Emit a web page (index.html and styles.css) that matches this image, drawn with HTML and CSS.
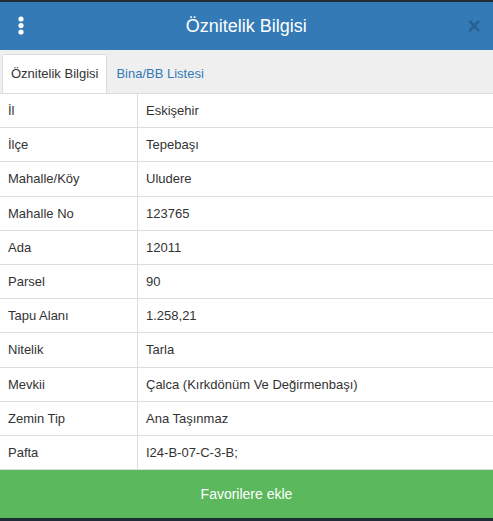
FILE: index.html
```html
<!DOCTYPE html>
<html lang="tr">
<head>
  <meta charset="UTF-8" />
  <meta name="viewport" content="width=device-width, initial-scale=1" />
  <title>Öznitelik Bilgisi</title>
  <link rel="stylesheet" href="styles.css">
</head>
<body>
  <div class="panel">
    <div class="panel-header">
      <button class="menu-btn" aria-label="Menü">
        <svg width="8" height="20" viewBox="0 0 8 20">
          <circle cx="4" cy="3" r="2.6" fill="#fff"/>
          <circle cx="4" cy="9.5" r="2.6" fill="#fff"/>
          <circle cx="4" cy="16" r="2.6" fill="#fff"/>
        </svg>
      </button>
      <h2>Öznitelik Bilgisi</h2>
      <button class="close-btn" aria-label="Kapat">&times;</button>
    </div>

    <div class="tabs">
      <a class="tab active" href="#">Öznitelik Bilgisi</a>
      <a class="tab" href="#">Bina/BB Listesi</a>
    </div>

    <table class="attr-table">
      <tbody id="attrRows"></tbody>
    </table>

    <button class="fav-btn">Favorilere ekle</button>
  </div>

  <script>
    const attrs = [
      ['İl', 'Eskişehir'],
      ['İlçe', 'Tepebaşı'],
      ['Mahalle/Köy', 'Uludere'],
      ['Mahalle No', '123765'],
      ['Ada', '12011'],
      ['Parsel', '90'],
      ['Tapu Alanı', '1.258,21'],
      ['Nitelik', 'Tarla'],
      ['Mevkii', 'Çalca (Kırkdönüm Ve Değirmenbaşı)'],
      ['Zemin Tip', 'Ana Taşınmaz'],
      ['Pafta', 'I24-B-07-C-3-B;']
    ];

    const attrRows = document.getElementById('attrRows');
    attrs.forEach(([key, value]) => {
      const row = document.createElement('tr');
      row.innerHTML = `<td class="key">${key}</td><td>${value}</td>`;
      attrRows.appendChild(row);
    });
  </script>
</body>
</html>
```

FILE: styles.css
```css
  body {
    font-family: "Liberation Sans", Arial, sans-serif;
    font-size: 13px;
    color: #333;
    margin: 0;
    background-color: #1f2b37;
  }
  .panel {
    margin-top: 2px;
    background: #fff;
    display: flex;
    flex-direction: column;
  }
  .panel-header {
    height: 48px;
    background-color: #337ab7;
    display: flex;
    align-items: center;
    padding: 0 12px 0 17px;
  }
  .panel-header h2 {
    flex: 1;
    margin: 0;
    text-align: center;
    color: #fff;
    font-size: 18px;
    font-weight: normal;
  }
  .menu-btn {
    background: none;
    border: none;
    padding: 0;
    display: flex;
  }
  .close-btn {
    background: none;
    border: none;
    padding: 0;
    font-family: "Liberation Sans", Arial, sans-serif;
    font-size: 23px;
    font-weight: bold;
    line-height: 1;
    color: #000;
    opacity: 0.2;
  }
  .tabs {
    display: flex;
    background-color: #efefef;
    padding: 4px 2px 0;
  }
  .tab {
    padding: 10px 8px 11px;
    line-height: 17px;
    color: #337ab7;
    text-decoration: none;
    border: 1px solid transparent;
    border-bottom: none;
    border-radius: 2px 2px 0 0;
  }
  .tab.active {
    background: #fff;
    color: #333;
    border-color: #ddd;
  }
  .attr-table {
    width: 100%;
    border-collapse: collapse;
  }
  .attr-table td {
    padding: 8px 8px;
    line-height: 17.2px;
    border-top: 1px solid #ddd;
  }
  .attr-table td.key {
    width: 121px;
    border-right: 1px solid #ddd;
  }
  .fav-btn {
    height: 49px;
    border: none;
    border-top: 1px solid #ddd;
    background-color: #5cb85c;
    color: #fff;
    font-family: "Liberation Sans", Arial, sans-serif;
    font-size: 14px;
  }
```
